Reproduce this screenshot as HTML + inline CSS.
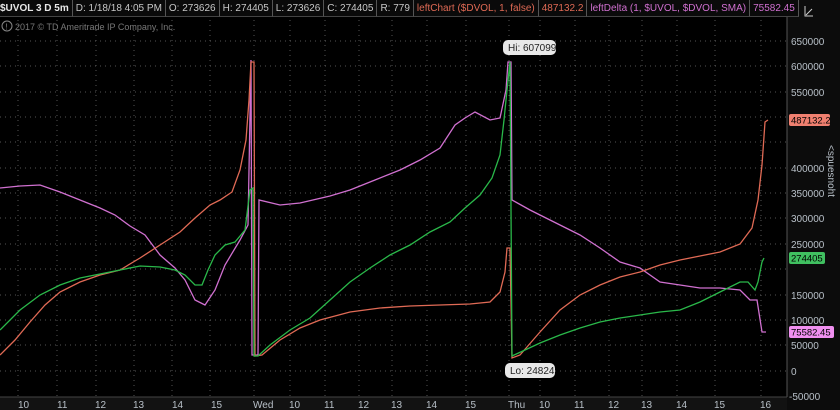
<!DOCTYPE html>
<html><head><meta charset="utf-8"><style>
body{margin:0;background:#000;width:840px;height:410px;overflow:hidden;font-family:"Liberation Sans",sans-serif;}
.hdr{position:absolute;top:0;left:0;height:17px;display:flex;font-size:10px;color:#c8c8c8;white-space:nowrap;}
.hdr span{border-right:1px solid #555;padding:1px 3px 0 3px;line-height:15px;background:#0a0a0a;border-bottom:1px solid #444;white-space:nowrap;}
</style></head><body>
<svg width="840" height="410" style="position:absolute;left:0;top:0" font-family="Liberation Sans, sans-serif">
<rect x="787" y="0" width="53" height="410" fill="#0c0c0c"/>
<line x1="787" y1="0" x2="787" y2="397" stroke="#555"/>
<rect x="0" y="397" width="787" height="13" fill="#121212"/>
<line x1="0" y1="397" x2="787" y2="397" stroke="#444"/>
<g stroke="#555" stroke-dasharray="1,4" stroke-width="1">
<line x1="0" y1="41" x2="787" y2="41"/><line x1="0" y1="66" x2="787" y2="66"/><line x1="0" y1="92" x2="787" y2="92"/><line x1="0" y1="117" x2="787" y2="117"/><line x1="0" y1="142" x2="787" y2="142"/><line x1="0" y1="168" x2="787" y2="168"/><line x1="0" y1="193" x2="787" y2="193"/><line x1="0" y1="218" x2="787" y2="218"/><line x1="0" y1="244" x2="787" y2="244"/><line x1="0" y1="269" x2="787" y2="269"/><line x1="0" y1="295" x2="787" y2="295"/><line x1="0" y1="320" x2="787" y2="320"/><line x1="0" y1="345" x2="787" y2="345"/><line x1="0" y1="371" x2="787" y2="371"/>
<line x1="18" y1="20" x2="18" y2="397"/><line x1="57" y1="20" x2="57" y2="397"/><line x1="96" y1="20" x2="96" y2="397"/><line x1="134" y1="20" x2="134" y2="397"/><line x1="172" y1="20" x2="172" y2="397"/><line x1="210" y1="20" x2="210" y2="397"/><line x1="254" y1="20" x2="254" y2="397"/><line x1="290" y1="20" x2="290" y2="397"/><line x1="325" y1="20" x2="325" y2="397"/><line x1="359" y1="20" x2="359" y2="397"/><line x1="392" y1="20" x2="392" y2="397"/><line x1="427" y1="20" x2="427" y2="397"/><line x1="466" y1="20" x2="466" y2="397"/><line x1="509" y1="20" x2="509" y2="397"/><line x1="540" y1="20" x2="540" y2="397"/><line x1="575" y1="20" x2="575" y2="397"/><line x1="609" y1="20" x2="609" y2="397"/><line x1="642" y1="20" x2="642" y2="397"/><line x1="677" y1="20" x2="677" y2="397"/><line x1="715" y1="20" x2="715" y2="397"/><line x1="761" y1="20" x2="761" y2="397"/>
</g>
<g fill="none" stroke-width="1.3">
<polyline stroke="#d070d0" points="0,188 20,186 40,185 60,192 80,200 100,208 115,215 130,226 145,235 160,255 175,268 185,280 195,300 205,305 215,290 225,265 240,240 248,225 251,60 252,355 258,355 259,200 280,205 300,203 330,196 350,190 375,180 400,170 420,160 440,148 455,125 465,118 475,112 490,120 500,118 506,90 508,62 511,62 512,200 530,210 550,220 580,235 600,248 620,262 640,268 660,282 680,285 700,288 720,288 740,290 750,300 757,300 762,332 766,332"/>
<polyline stroke="#e06a55" points="0,355 15,340 30,322 45,305 60,292 80,282 100,275 120,270 140,258 160,245 180,232 195,218 210,205 220,200 232,192 240,170 246,140 249,100 251,62 254,62 255,356 262,355 280,340 300,328 320,320 350,312 380,308 410,306 440,305 470,304 490,302 500,292 505,272 507,248 510,248 512,358 520,355 540,332 560,310 580,295 600,285 620,277 640,272 660,265 680,260 700,256 720,252 740,244 752,228 758,200 762,165 765,122 768,120"/>
<polyline stroke="#2ab84a" points="0,330 20,310 40,295 60,285 80,278 100,274 120,270 140,266 160,267 175,270 185,275 195,285 202,285 208,270 215,255 225,245 235,242 245,230 250,190 253,188 254,356 258,356 270,345 290,330 310,318 330,300 350,282 370,268 390,255 410,245 430,232 450,222 465,208 480,195 492,178 500,155 504,120 507,90 510,62 512,356 525,350 540,343 560,335 580,328 600,322 620,318 640,315 660,312 680,310 700,302 720,292 740,282 748,282 755,290 758,282 762,262 764,258"/>
</g>
<g fill="#b8c0c8" font-size="10">
<text x="791" y="45">650000</text><text x="791" y="70">600000</text><text x="791" y="96">550000</text><text x="791" y="121">500000</text><text x="791" y="172">400000</text><text x="791" y="197">350000</text><text x="791" y="222">300000</text><text x="791" y="248">250000</text><text x="791" y="299">150000</text><text x="791" y="324">100000</text><text x="791" y="349">50000</text><text x="791" y="375">0</text><text x="789" y="400">-50000</text>
</g>
<rect x="789" y="114" width="41" height="12" rx="2" fill="#f08070"/><text x="791" y="123.5" font-size="9.5" fill="#000">487132.2</text>
<rect x="789" y="252" width="36" height="12" rx="2" fill="#40c060"/><text x="791" y="261.5" font-size="9.5" fill="#000">274405</text>
<rect x="789" y="326" width="45" height="12" rx="2" fill="#f090f0"/><text x="791" y="335.5" font-size="9.5" fill="#000">75582.45</text>
<text x="828" y="145" font-size="10" fill="#b8c0c8" transform="rotate(90 828 145)">&lt;spuesnoht</text>
<path d="M805 6 v10 h8 M806 15 l6-6" stroke="#ccc" fill="none"/>
<rect x="503" y="40" width="53" height="15" rx="5" fill="#e8e8e8"/><text x="508" y="51" font-size="10" fill="#222">Hi: 607099</text>
<rect x="505" y="363" width="50" height="15" rx="5" fill="#e8e8e8"/><text x="510" y="374" font-size="10" fill="#222">Lo: 24824</text>
<g fill="#b8c0c8" font-size="10">
<text x="18" y="408">10</text><text x="57" y="408">11</text><text x="95" y="408">12</text><text x="133" y="408">13</text><text x="172" y="408">14</text><text x="211" y="408">15</text><text x="253" y="408">Wed</text><text x="289" y="408">10</text><text x="324" y="408">11</text><text x="358" y="408">12</text><text x="391" y="408">13</text><text x="426" y="408">14</text><text x="465" y="408">15</text><text x="508" y="408">Thu</text><text x="539" y="408">10</text><text x="574" y="408">11</text><text x="608" y="408">12</text><text x="641" y="408">13</text><text x="676" y="408">14</text><text x="714" y="408">15</text><text x="760" y="408">16</text>
</g>
<circle cx="7" cy="26" r="5" fill="none" stroke="#888"/><text x="5.5" y="29.5" font-size="8" fill="#888">!</text>
<text x="15" y="30" font-size="9" fill="#777">2017 © TD Ameritrade IP Company, Inc.</text>
</svg>
<div class="hdr">
<span style="font-weight:bold;color:#e8e8e8;padding-left:0">$UVOL 3 D 5m</span><span>D: 1/18/18 4:05 PM</span><span>O: 273626</span><span>H: 274405</span><span>L: 273626</span><span>C: 274405</span><span>R: 779</span><span style="color:#e06a55">leftChart ($DVOL, 1, false)</span><span style="color:#e06a55">487132.2</span><span style="color:#d070d0">leftDelta (1, $UVOL, $DVOL, SMA)</span><span style="color:#d070d0">75582.45</span>
</div>
</body></html>
